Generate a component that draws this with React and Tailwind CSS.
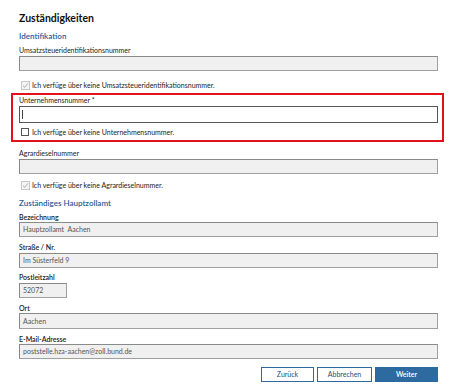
import React from "react";

const font = { fontFamily: "Lato, 'Open Sans', sans-serif" };

function Check({ checked }) {
  if (checked) {
    return (
      <span className="inline-flex h-[9px] w-[9px] items-center justify-center border border-[#c8c8c8] bg-[#f4f4f4]">
        <svg width="7" height="7" viewBox="0 0 7 7">
          <path d="M1 3.6 L2.8 5.3 L6 1.3" fill="none" stroke="#b0b0b0" strokeWidth="1" />
        </svg>
      </span>
    );
  }
  return <span className="inline-block h-[8px] w-[8px] border border-[#555] bg-white" />;
}

function Label({ children, bold, className = "" }) {
  return (
    <div className={`h-[10px] text-[7px] leading-[10px] text-[#222] ${bold ? "font-semibold" : ""} ${className}`}>
      {children}
    </div>
  );
}

function Field({ value, className = "", width = "w-full", h = "h-[15px]" }) {
  return (
    <div
      className={`${width} ${h} flex items-center whitespace-pre border border-[#a0a0a0] border-t-[#8a8a8a] border-l-[#8a8a8a] bg-[#f0f0f0] pl-[3px] text-[7px] text-[#555] ${className}`}
    >
      {value}
    </div>
  );
}

function CheckRow({ checked, text, className = "" }) {
  return (
    <div className={`flex h-[10px] items-center ${className}`}>
      <div className="flex w-[13px] items-center pl-[2px]">
        <Check checked={checked} />
      </div>
      <span className="text-[7px] leading-[10px] text-[#222]">{text}</span>
    </div>
  );
}

export default function App() {
  return (
    <div className="w-[450px] h-[390px] bg-white pl-[19px] pr-[12px] pt-[12px]" style={font}>
      <div className="h-[12px] text-[10.5px] font-bold leading-[12px] text-[#111]">Zuständigkeiten</div>
      <div className="mt-[7px] h-[10px] text-[8px] font-semibold leading-[10px] text-[#1f5c99]">Identifikation</div>
      <Label className="mt-[4px]">Umsatzsteueridentifikationsnummer</Label>
      <Field className="mt-[1px]" />
      <CheckRow className="mt-[9px]" checked text="Ich verfüge über keine Umsatzsteueridentifikationsnummer." />

      <div className="mt-[3px] ml-[-8px] mr-[-6px] border-2 border-[#e3101d] pl-[6px] pr-[4px] pb-[3px]">
        <Label>Unternehmensnummer *</Label>
        <div className="mt-[1px] flex h-[17px] items-center border border-[#555] bg-white pl-[2px]">
          <span className="h-[9px] w-px bg-[#444]" />
        </div>
        <CheckRow className="mt-[4px]" checked={false} text="Ich verfüge über keine Unternehmensnummer." />
      </div>

      <Label className="mt-[6px]">Agrardieselnummer</Label>
      <Field className="mt-[1px]" />
      <CheckRow className="mt-[6px]" checked text="Ich verfüge über keine Agrardieselnummer." />

      <div className="mt-[8px] h-[10px] text-[8px] font-semibold leading-[10px] text-[#1f5c99]">Zuständiges Hauptzollamt</div>
      <Label bold className="mt-[4px]">Bezeichnung</Label>
      <Field value="Hauptzollamt  Aachen" />
      <Label bold className="mt-[5px]">Straße / Nr.</Label>
      <Field className="mt-[1px]" value="Im Süsterfeld 9" />
      <Label bold className="mt-[4px]">Postleitzahl</Label>
      <Field className="mt-[1px]" width="w-[48px]" value="52072" />
      <Label bold className="mt-[5px]">Ort</Label>
      <Field h="h-[16px]" value="Aachen" />
      <Label bold className="mt-[5px]">E-Mail-Adresse</Label>
      <Field value="poststelle.hza-aachen@zoll.bund.de" />

      <div className="mt-[8px] flex justify-end gap-[3px]">
        <button className="h-[15px] w-[53px] border border-[#2d6a9f] bg-white text-[7px] text-[#1d4f80]">Zurück</button>
        <button className="h-[15px] w-[55px] border border-[#2d6a9f] bg-white text-[7px] text-[#1d4f80]">Abbrechen</button>
        <button className="h-[15px] w-[63px] border border-[#2d6a9f] bg-[#2d6a9f] text-[7px] font-semibold text-white">Weiter</button>
      </div>
    </div>
  );
}
